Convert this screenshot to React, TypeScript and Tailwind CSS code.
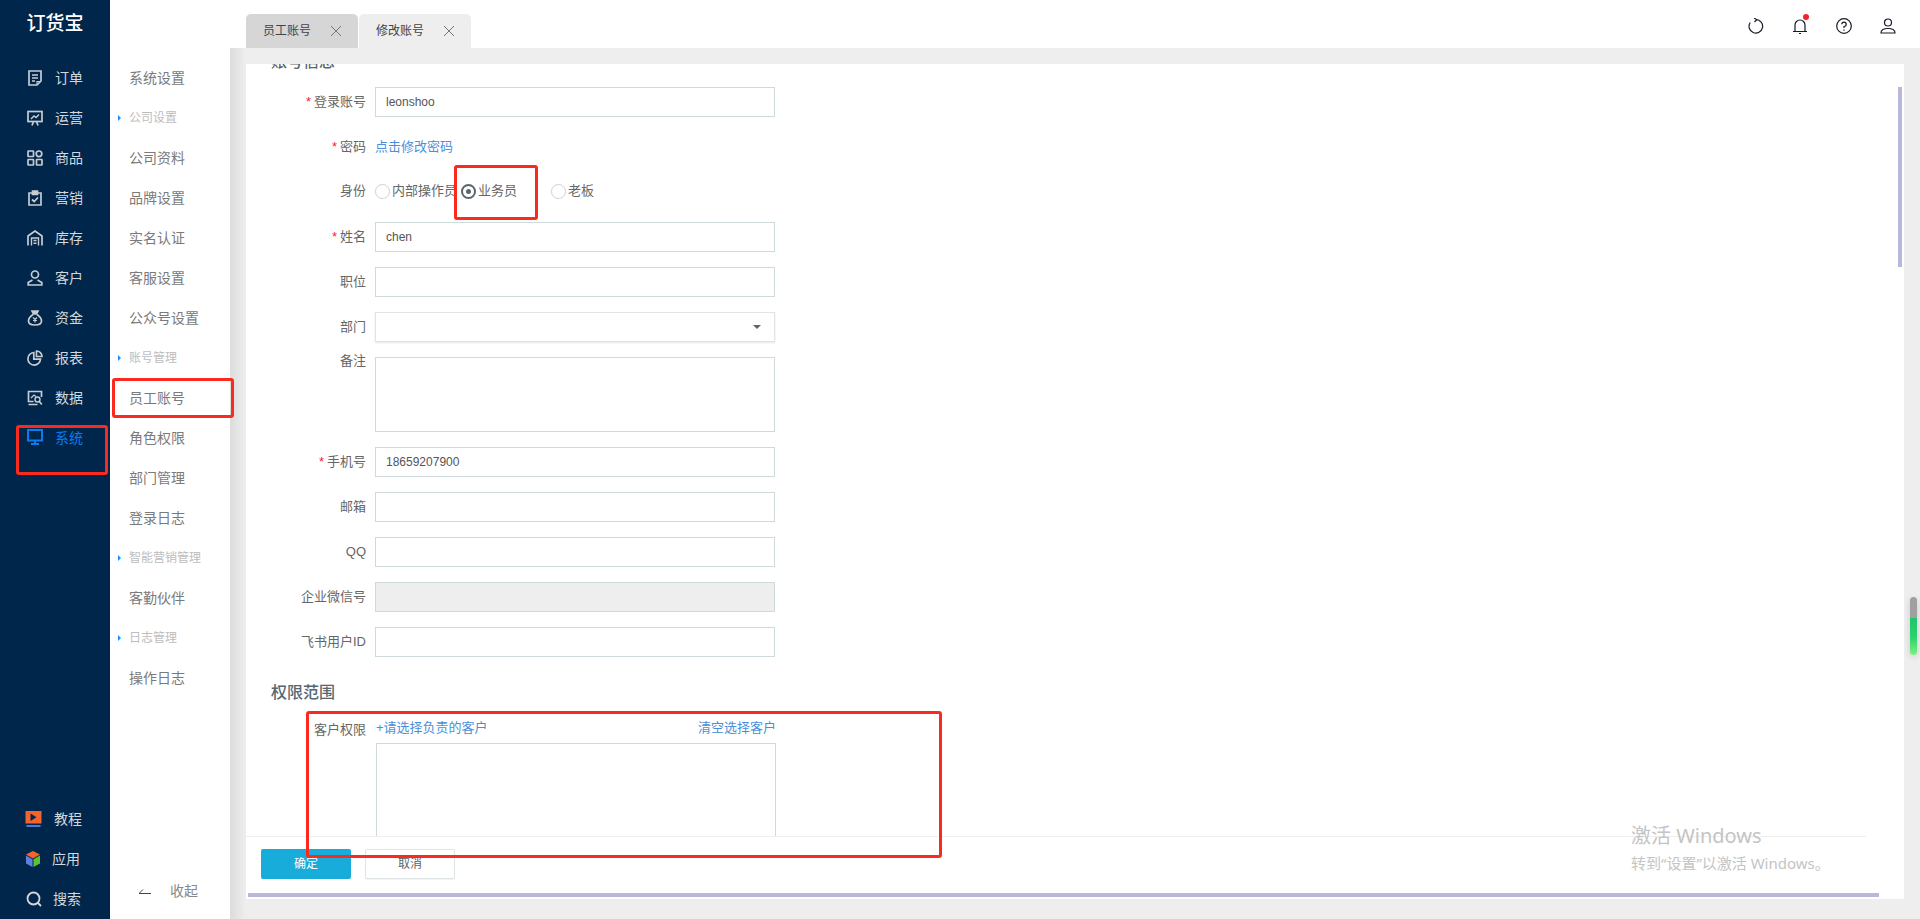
import type { ReactNode } from 'react';

const FONT = 'font-["Liberation_Sans","Noto_Sans_CJK_SC",sans-serif]';

function Ico({ children, className = '', strokeWidth = 1.7 }: { children: ReactNode; className?: string; strokeWidth?: number }) {
    return (
        <svg viewBox="0 0 16 16" fill="none" stroke="currentColor" strokeWidth={strokeWidth} className={`h-4 w-4 shrink-0 ${className}`}>
            {children}
        </svg>
    );
}

const MENU: { label: string; icon: ReactNode; active?: boolean }[] = [
    { label: '订单', icon: <><path d="M2 1h12v10l-4 4H2z" /><path d="M5 5h6M5 8h6M5 11h3" strokeWidth="1.4" /><path d="M10 15v-3.500h4" strokeWidth="1.2" /></> },
    { label: '运营', icon: <><rect x="1" y="1.500" width="14" height="10" /><path d="M4 9l3-3 2 1.500 3-3" strokeWidth="1.400" /><path d="M5 15.500l1.500-4M11 15.500l-1.500-4" /></> },
    { label: '商品', icon: <><rect x="1" y="1" width="5.500" height="5.500" rx="0.500" /><circle cx="12" cy="3.800" r="2.800" /><rect x="1" y="9.500" width="5.500" height="5.500" rx="0.500" /><rect x="9.500" y="9.500" width="5.500" height="5.500" rx="0.500" /></> },
    { label: '营销', icon: <><path d="M5 3H2v12h12V3h-3" /><path d="M5.500 1h5v3.500h-5z" fill="currentColor" /><path d="M5 9.500l2.200 2L11 7.500" /></> },
    { label: '库存', icon: <><path d="M1 15.500V6l7-5 7 5v9.500" /><path d="M4.500 15.500V8h7v7.500" strokeWidth="1.400" /><path d="M6.500 10.500h3M6.500 13.200h3" strokeWidth="1.400" /></> },
    { label: '客户', icon: <><circle cx="8" cy="4.500" r="3.500" /><path d="M5.500 10L1.200 12.500V15h13.600v-2.500L10.500 10" /></> },
    { label: '资金', icon: <><path d="M5 1h6L9.500 4h-3z" fill="currentColor" /><path d="M6 4.500C3 6.500 1.500 9 1.500 11c0 2.700 2 4 6.500 4s6.500-1.300 6.500-4c0-2-1.500-4.500-4.500-6.500" /><path d="M6 7.500l2 2 2-2M8 9.500v3M6 10.500h4" strokeWidth="1.200" /></> },
    { label: '报表', icon: <><path d="M6.800 2.500a6.300 6.300 0 1 0 6.700 6.700H6.800z" /><path d="M9.500 1v5.500H15A5.500 5.500 0 0 0 9.500 1z" /></> },
    { label: '数据', icon: <><path d="M14.500 7V1.500h-13v10h5M1.500 14.500h9" /><path d="M4 8l3-3 2 1.500" strokeWidth="1.300" /><circle cx="10.500" cy="9.500" r="2.500" strokeWidth="1.400" /><path d="M12.300 11.500l2.500 3" /></> },
    { label: '系统', active: true, icon: <><rect x="1" y="1" width="14" height="10.500" strokeWidth="2" /><path d="M8 11.500V15M4 15h8" strokeWidth="2" /></> },
];

function SideRow({ label, icon, active }: { label: string; icon: ReactNode; active?: boolean }) {
    return (
        <div className={`flex h-10 items-center pl-[27px] text-sm ${active ? 'text-[#0a7cf0]' : 'text-[#d3d8dd]'}`}>
            <span className={`flex ${active ? '-mt-[2px]' : 'text-[#c8ccd0]'}`}>
                <Ico>{icon}</Ico>
            </span>
            <span className="ml-3">{label}</span>
        </div>
    );
}

type NavItem = { label: string; group?: boolean };

const NAV: NavItem[] = [
    { label: '系统设置' },
    { label: '公司设置', group: true },
    { label: '公司资料' },
    { label: '品牌设置' },
    { label: '实名认证' },
    { label: '客服设置' },
    { label: '公众号设置' },
    { label: '账号管理', group: true },
    { label: '员工账号' },
    { label: '角色权限' },
    { label: '部门管理' },
    { label: '登录日志' },
    { label: '智能营销管理', group: true },
    { label: '客勤伙伴' },
    { label: '日志管理', group: true },
    { label: '操作日志' },
];

function Label({ text, required, top }: { text: string; required?: boolean; top?: boolean }) {
    return (
        <div className={`flex w-[120px] shrink-0 justify-end text-[13px] text-[#666] ${top ? 'leading-[8px]' : ''}`}>
            {required && <span className="mr-[3px] text-[#f5222d]">*</span>}
            {text}
        </div>
    );
}

function Field({ label, required, value, disabled }: { label: string; required?: boolean; value?: string; disabled?: boolean }) {
    return (
        <div className="mb-[15px] flex h-[30px] items-center">
            <Label text={label} required={required} />
            <div className={`ml-[9px] flex h-[30px] w-[400px] items-center border border-[#cfdadd] px-[10px] text-xs text-[#555] ${disabled ? 'bg-[#eeeeee]' : 'bg-white'}`}>
                {value}
            </div>
        </div>
    );
}

function Radio({ label, checked, className = '' }: { label: string; checked?: boolean; className?: string }) {
    return (
        <div className={`flex items-center text-[13px] text-[#666] ${className}`}>
            {checked ? (
                <span className="flex h-[15px] w-[15px] items-center justify-center rounded-full border-2 border-[#58666e]">
                    <span className="h-[5px] w-[5px] rounded-full bg-[#58666e]" />
                </span>
            ) : (
                <span className="h-[15px] w-[15px] rounded-full border border-[#cfcfcf] bg-white" />
            )}
            <span className="ml-[2px]">{label}</span>
        </div>
    );
}

function Mark({ className }: { className: string }) {
    return <div className={`pointer-events-none absolute rounded-[3px] border-[3px] border-[#fb2a1e] ${className}`} />;
}

export default function App() {
    return (
        <div className={`relative flex h-[919px] w-[1920px] overflow-hidden bg-white ${FONT}`}>
            {/* main menu */}
            <aside className="flex w-[110px] shrink-0 flex-col bg-[#00264b]">
                <div className="flex h-[58px] items-start justify-center pt-[10px] text-[19px] font-medium leading-[28px] text-white">订货宝</div>
                {MENU.map((m) => (
                    <SideRow key={m.label} {...m} />
                ))}
                <div className="mt-auto">
                    <div className="flex h-10 items-center pl-[25px] text-sm text-[#d3d8dd]">
                        <svg viewBox="0 0 17 17" className="h-[17px] w-[17px] shrink-0">
                            <rect x="0.500" y="0" width="16" height="12.500" fill="#f4622e" />
                            <path d="M5.500 2.500l6 3.700-6 3.700z" fill="#00264b" />
                            <rect x="1.500" y="14" width="14" height="2" fill="#4e78d8" />
                        </svg>
                        <span className="ml-3">教程</span>
                    </div>
                    <div className="flex h-10 items-center pl-[25px] text-sm text-[#d3d8dd]">
                        <svg viewBox="0 0 16 16" className="h-4 w-4 shrink-0">
                            <path d="M8 0l7 3.500L8 7.500 1 3.500z" fill="#f4622e" />
                            <path d="M1 4.500l6.500 3.700V16L1 12.500z" fill="#5b82e0" />
                            <path d="M15 4.500L8.500 8.200V16l6.500-3.500z" fill="#5cc22e" />
                        </svg>
                        <span className="ml-[11px]">应用</span>
                    </div>
                    <div className="flex h-10 items-center pl-[26px] text-sm text-[#d3d8dd]">
                        <Ico strokeWidth={1.8}>
                            <circle cx="7.500" cy="7.500" r="6" />
                            <path d="M12 12l3 3" />
                        </Ico>
                        <span className="ml-[11px]">搜索</span>
                    </div>
                </div>
            </aside>

            <div className="flex min-w-0 flex-1 flex-col">
                {/* tabs + tools */}
                <header className="flex h-12 shrink-0 items-end justify-between bg-white pl-[136px] pr-6">
                    <div className="flex gap-px">
                        <div className="flex h-[34px] w-[112px] items-center justify-between rounded-t-[5px] bg-[#d6d6d6] pl-[17px] pr-[16px] text-xs text-[#444]">
                            员工账号
                            <svg viewBox="0 0 12 12" stroke="#777" className="h-3 w-3"><path d="M1 1l10 10M11 1L1 11" /></svg>
                        </div>
                        <div className="flex h-[34px] w-[112px] items-center justify-between rounded-t-[5px] bg-[#eeeeee] pl-[17px] pr-[16px] text-xs text-[#444]">
                            修改账号
                            <svg viewBox="0 0 12 12" stroke="#777" className="h-3 w-3"><path d="M1 1l10 10M11 1L1 11" /></svg>
                        </div>
                    </div>
                    <div className="mb-[14px] flex gap-7 text-[#1a1a2a]">
                        <Ico strokeWidth={1.2}><path d="M8 1.500A6.800 6.800 0 1 1 2.200 4.500" /><path d="M6 0l2.700 1.600L6.500 4" /></Ico>
                        <div className="relative">
                            <Ico strokeWidth={1.2}><path d="M1 13.500h14M3 13.500V7a5 5 0 0 1 10 0v6.500M7 15.500h2" /></Ico>
                            <span className="absolute -top-[4px] left-[11px] h-[6px] w-[6px] rounded-full bg-[#f5222d]" />
                        </div>
                        <Ico strokeWidth={1.2}><circle cx="8" cy="8" r="7.300" /><path d="M5.800 6.200A2.200 2.200 0 1 1 8 8.500v1.500M8 11.500v1.300" /></Ico>
                        <Ico strokeWidth={1.2}><circle cx="8" cy="4.500" r="3.500" /><path d="M1 15c0-3 3-4.500 7-4.500s7 1.500 7 4.500z" /></Ico>
                    </div>
                </header>

                <div className="flex min-h-0 flex-1">
                    {/* sub menu */}
                    <nav className="flex w-[120px] shrink-0 flex-col bg-white pt-[10px]">
                        {NAV.map((n) =>
                            n.group ? (
                                <div key={n.label} className="flex h-10 items-center pl-2 text-xs text-[#bdbdbd]">
                                    <span className="h-0 w-0 border-y-[3px] border-l-[3px] border-y-transparent border-l-[#1890ff]" />
                                    <span className="ml-2">{n.label}</span>
                                </div>
                            ) : (
                                <div key={n.label} className="flex h-10 items-center pl-[19px] text-sm text-[#7a7a7a]">
                                    {n.label}
                                </div>
                            ),
                        )}
                        <div className="mt-auto flex h-[54px] items-center pb-[2px] pl-[29px] text-sm text-[#888]">
                            <svg viewBox="0 0 12 6" stroke="#444" fill="none" className="h-[6px] w-3"><path d="M0 5.500h12M0 5.500L4 1.500" /></svg>
                            <span className="ml-[19px]">收起</span>
                        </div>
                    </nav>

                    {/* content */}
                    <main className="flex min-w-0 flex-1 bg-[#eeeeee] bg-[linear-gradient(90deg,#dcdcdc_0,#eeeeee_16px)] pb-5 pl-4 pr-4 pt-4">
                        <div className="relative flex min-w-0 flex-1 flex-col bg-white">
                            <div className="min-h-0 flex-1 overflow-hidden">
                                <div className="-mt-[12px]">
                                    <h2 className="mb-[15px] ml-[25px] h-[20px] text-base font-medium leading-[20px] text-[#58666e]">账号信息</h2>
                                    <Field label="登录账号" required value="leonshoo" />
                                    <div className="mb-[15px] flex h-[30px] items-center">
                                        <Label text="密码" required />
                                        <a className="ml-[9px] text-[13px] text-[#4a8fd8]">点击修改密码</a>
                                    </div>
                                    <div className="mb-[15px] flex h-[30px] items-center">
                                        <div className="-mt-[2px] flex items-center">
                                            <Label text="身份" />
                                            <div className="ml-[9px] flex">
                                                <Radio label="内部操作员" />
                                                <Radio label="业务员" checked className="ml-[4px]" />
                                                <Radio label="老板" className="ml-[34px]" />
                                            </div>
                                        </div>
                                    </div>
                                    <Field label="姓名" required value="chen" />
                                    <Field label="职位" />
                                    <div className="mb-[15px] flex h-[30px] items-center">
                                        <Label text="部门" />
                                        <div className="ml-[9px] flex h-[30px] w-[400px] items-center justify-end border border-[#dfe5e7] px-[13px] shadow-[0_1px_2px_rgba(0,0,0,0.1)]">
                                            <span className="h-0 w-0 border-x-4 border-t-4 border-x-transparent border-t-[#58666e]" />
                                        </div>
                                    </div>
                                    <div className="mb-[15px] flex h-[75px]">
                                        <Label text="备注" top />
                                        <div className="ml-[9px] w-[400px] border border-[#cfdadd]" />
                                    </div>
                                    <Field label="手机号" required value="18659207900" />
                                    <Field label="邮箱" />
                                    <Field label="QQ" />
                                    <Field label="企业微信号" disabled />
                                    <Field label="飞书用户ID" />
                                    <h2 className="ml-[25px] h-[48px] text-base font-medium leading-[42px] text-[#58666e]">权限范围</h2>
                                    <div className="flex">
                                        <Label text="客户权限" />
                                        <div className="ml-[10px] w-[400px]">
                                            <div className="flex justify-between text-[13px] leading-[16px] text-[#4a8fd8]">
                                                <a>+请选择负责的客户</a>
                                                <a>清空选择客户</a>
                                            </div>
                                            <div className="mt-[7px] h-[150px] border border-[#cfdadd]" />
                                        </div>
                                    </div>
                                </div>
                            </div>
                            <div className="shrink-0">
                                <div className="mr-[38px] flex gap-[14px] border-t border-[#eeeeee] pl-[15px] pt-[12px]">
                                    <button className="h-[30px] w-[90px] rounded-[2px] bg-[#17acd9] text-xs text-white">确定</button>
                                    <button className="h-[30px] w-[90px] rounded-[2px] border border-[#dee5e7] bg-white text-xs text-[#58666e] shadow-[0_1px_1px_rgba(0,0,0,0.05)]">取消</button>
                                </div>
                                <div className="ml-[2px] mr-[25px] mt-[14px] h-1 bg-[#b8b8dc]" />
                                <div className="h-[2px]" />
                            </div>
                            {/* vertical scroll thumb */}
                            <div className="absolute right-[2px] top-[23px] h-[180px] w-1 bg-[#b8b8dc]" />
                        </div>
                    </main>
                </div>
            </div>

            {/* annotation boxes drawn over the screenshot */}
            <Mark className="left-[16px] top-[425px] h-[50px] w-[92px]" />
            <Mark className="left-[112px] top-[378px] h-[40px] w-[122px]" />
            <Mark className="left-[454px] top-[165px] h-[55px] w-[84px]" />
            <Mark className="left-[306px] top-[711px] h-[147px] w-[636px]" />

            {/* floating widget on the right edge */}
            <div className="absolute left-[1910px] top-[597px] h-[58px] w-[7px] overflow-hidden rounded-full bg-[linear-gradient(180deg,#a0a0a0_0,#a0a0a0_36%,#1fc46c_37%,#2dd36f_70%,#7ff07f_100%)] shadow-[0_2px_6px_rgba(0,0,0,0.15)]" />

            {/* windows activation watermark */}
            <div className='pointer-events-none absolute left-[1631px] top-[822px] font-["Noto_Sans","Noto_Sans_CJK_SC",sans-serif] text-[#c4c4c4]'>
                <div className="text-xl leading-[28px]">激活 Windows</div>
                <div className="mt-[3px] text-[15px] leading-[20px]">转到“设置”以激活 Windows。</div>
            </div>
        </div>
    );
}
